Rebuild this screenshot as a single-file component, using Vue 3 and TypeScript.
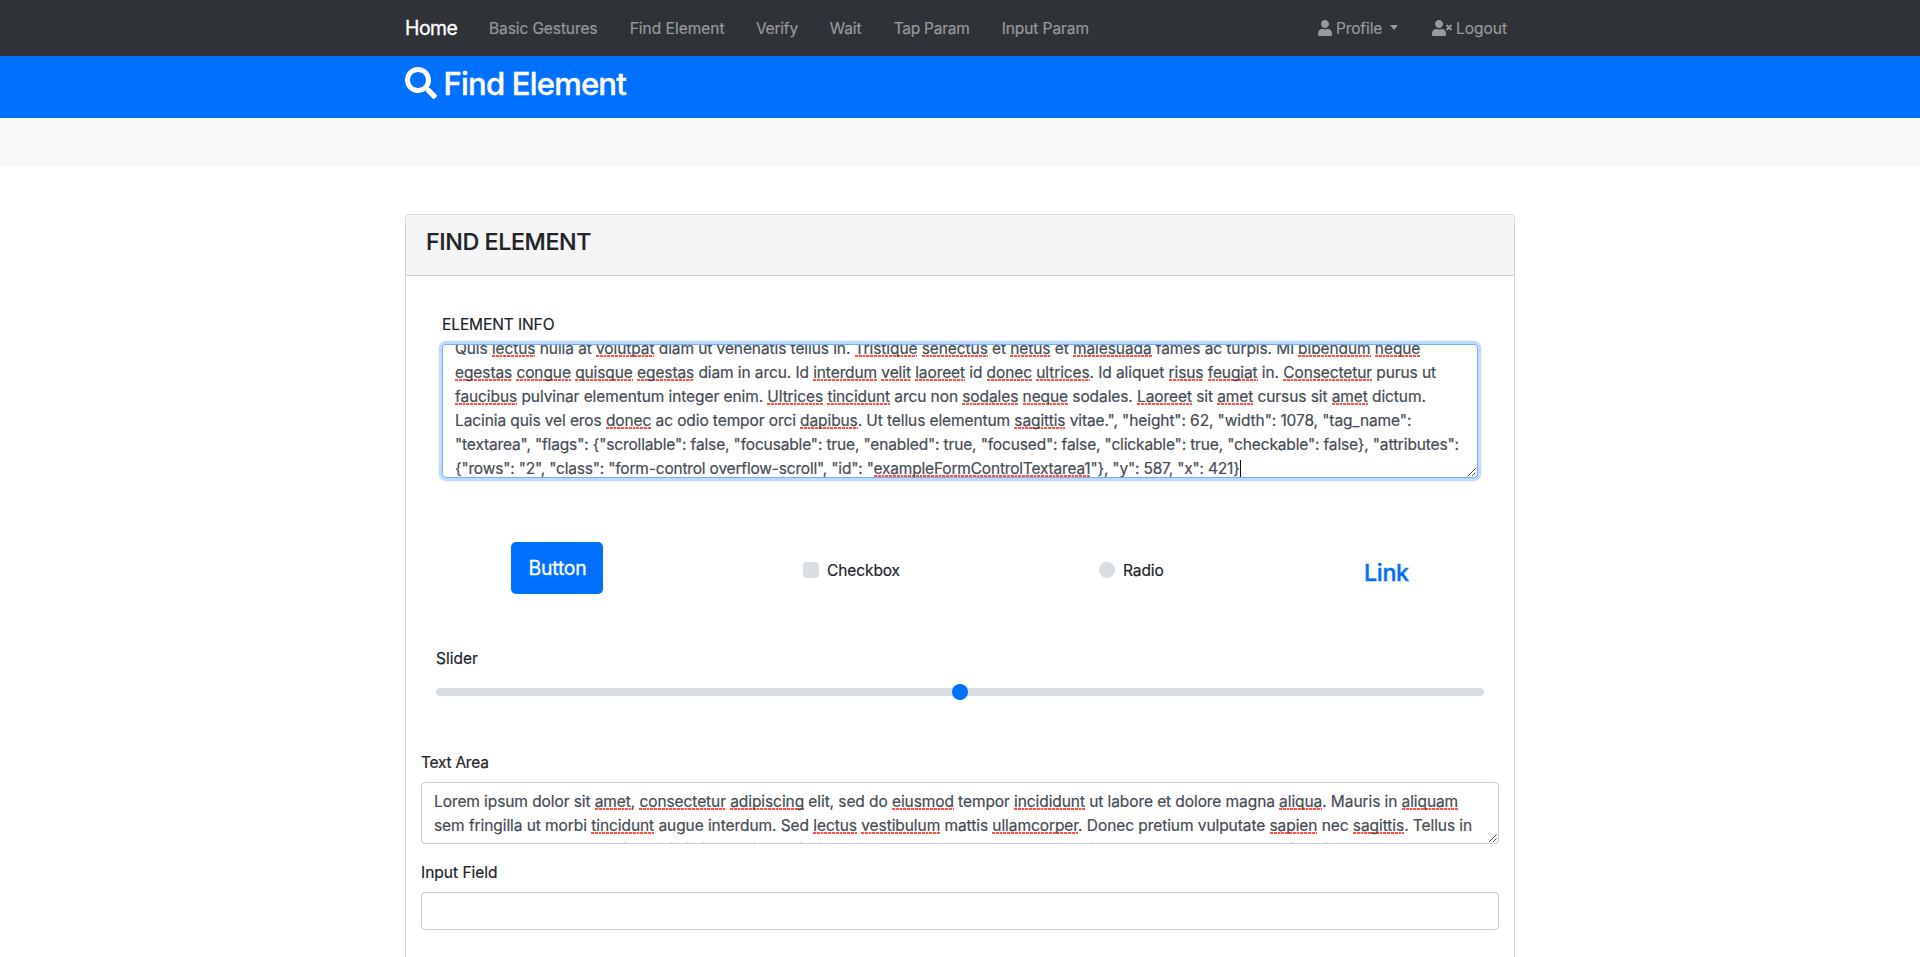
<script setup lang="ts">
interface Segment {
  text: string
  flagged: boolean
}

const links = [
  { label: 'Basic Gestures', cls: 'gestures' },
  { label: 'Find Element', cls: 'find' },
  { label: 'Verify', cls: 'verify' },
  { label: 'Wait', cls: 'wait' },
  { label: 'Tap Param', cls: 'tap' },
  { label: 'Input Param', cls: 'input-param' },
]

// Words between tildes are marked by the spell checker.
const parse = (line: string): Segment[] =>
  line
    .split('~')
    .map((text, i) => ({ text, flagged: i % 2 === 1 }))
    .filter((s) => s.text.length > 0)

const infoLines = [
  'Quis ~lectus~ nulla at ~volutpat~ diam ut venenatis tellus in. ~Tristique~ ~senectus~ et ~netus~ et ~malesuada~ fames ac turpis. Mi ~bibendum~ ~neque~',
  '~egestas~ ~congue~ ~quisque~ ~egestas~ diam in arcu. Id ~interdum~ ~velit~ ~laoreet~ id ~donec~ ~ultrices~. Id aliquet ~risus~ ~feugiat~ in. ~Consectetur~ purus ut',
  '~faucibus~ pulvinar elementum integer enim. ~Ultrices~ ~tincidunt~ arcu non ~sodales~ ~neque~ sodales. ~Laoreet~ sit ~amet~ cursus sit ~amet~ dictum.',
  'Lacinia quis vel eros ~donec~ ac odio tempor orci ~dapibus~. Ut tellus elementum ~sagittis~ vitae.", "height": 62, "width": 1078, "tag_name":',
  '"textarea", "flags": {"scrollable": false, "focusable": true, "enabled": true, "focused": false, "clickable": true, "checkable": false}, "attributes":',
  '{"rows": "2", "class": "form-control overflow-scroll", "id": "~exampleFormControlTextarea1~"}, "y": 587, "x": 421}',
].map(parse)

const areaLines = [
  'Lorem ipsum dolor sit ~amet~, ~consectetur~ ~adipiscing~ elit, sed do ~eiusmod~ tempor ~incididunt~ ut labore et dolore magna ~aliqua~. Mauris in ~aliquam~',
  'sem fringilla ut morbi ~tincidunt~ augue interdum. Sed ~lectus~ ~vestibulum~ mattis ~ullamcorper~. Donec pretium vulputate ~sapien~ nec ~sagittis~. Tellus in',
  'metus vulputate eu scelerisque felis imperdiet proin fermentum leo vel orci porta non pulvinar neque laoreet suspendisse interdum',
].map(parse)
</script>

<template>
  <div class="page">
    <nav class="navbar">
      <div class="container nav-row">
        <a class="brand">Home</a>
        <a v-for="l in links" :key="l.label" class="nav-link" :class="l.cls">{{ l.label }}</a>
        <div class="nav-right">
          <a class="nav-link profile">
            <svg width="14" height="16" viewBox="0 0 448 512"><path fill="currentColor" d="M224 256c70.7 0 128-57.3 128-128S294.7 0 224 0 96 57.3 96 128s57.3 128 128 128zm89.6 32h-16.7c-22.2 10.2-46.9 16-72.9 16s-50.6-5.8-72.9-16h-16.7C60.2 288 0 348.2 0 422.4V464c0 26.5 21.5 48 48 48h352c26.5 0 48-21.5 48-48v-41.6c0-74.2-60.2-134.4-134.4-134.4z" /></svg>
            <span>Profile</span>
            <i class="caret"></i>
          </a>
          <a class="nav-link">
            <svg width="20" height="16" viewBox="0 0 640 512"><path fill="currentColor" d="M589.6 240l45.6-45.6c6.3-6.3 6.3-16.5 0-22.8l-22.8-22.8c-6.3-6.3-16.5-6.3-22.8 0L544 194.4l-45.6-45.6c-6.3-6.3-16.5-6.3-22.8 0l-22.8 22.8c-6.3 6.3-6.3 16.5 0 22.8l45.6 45.6-45.6 45.6c-6.3 6.3-6.3 16.5 0 22.8l22.8 22.8c6.3 6.3 16.5 6.3 22.8 0l45.6-45.6 45.6 45.6c6.3 6.3 16.5 6.3 22.8 0l22.8-22.8c6.3-6.3 6.3-16.5 0-22.8L589.6 240z" /><path fill="currentColor" d="M224 256c70.7 0 128-57.3 128-128S294.7 0 224 0 96 57.3 96 128s57.3 128 128 128zm89.6 32h-16.7c-22.2 10.2-46.9 16-72.9 16s-50.6-5.8-72.9-16h-16.7C60.2 288 0 348.2 0 422.4V464c0 26.5 21.5 48 48 48h352c26.5 0 48-21.5 48-48v-41.6c0-74.2-60.2-134.4-134.4-134.4z" /></svg>
            <span>Logout</span>
          </a>
        </div>
      </div>
    </nav>

    <header class="banner">
      <div class="container banner-row">
        <svg width="32" height="32" viewBox="0 0 512 512"><path fill="currentColor" d="M505 442.7L405.3 343c-4.5-4.5-10.6-7-17-7H372c27.6-35.3 44-79.7 44-128C416 93.1 322.9 0 208 0S0 93.1 0 208s93.1 208 208 208c48.3 0 92.7-16.4 128-44v16.3c0 6.4 2.5 12.5 7 17l99.7 99.7c9.4 9.4 24.6 9.4 33.9 0l28.3-28.3c9.4-9.4 9.4-24.6.1-34zM208 336c-70.7 0-128-57.2-128-128 0-70.7 57.2-128 128-128 70.7 0 128 57.2 128 128 0 70.7-57.2 128-128 128z" /></svg>
        <h1>Find Element</h1>
      </div>
    </header>
    <div class="strip"></div>

    <main class="container card">
      <div class="card-header"><h4>FIND ELEMENT</h4></div>

      <section class="info">
        <label class="info-label">ELEMENT INFO</label>
        <div class="control focused">
          <div class="lines scrolled">
            <div v-for="(line, i) in infoLines" :key="i" class="line" :class="'info-' + (i + 1)">
              <span v-for="(s, j) in line" :key="j" :class="{ flagged: s.flagged }">{{ s.text }}</span><i v-if="i === infoLines.length - 1" class="cursor"></i>
            </div>
          </div>
          <svg class="grip" width="9" height="9" viewBox="0 0 9 9"><path d="M0 8L7.5 .5M4 8L7.5 4.5" stroke="#4c4c4c" fill="none" /></svg>
        </div>
      </section>

      <section class="widgets">
        <button class="btn" type="button">Button</button>
        <div class="check checkbox"><i class="box"></i><span>Checkbox</span></div>
        <div class="check radio"><i class="box round"></i><span>Radio</span></div>
        <a class="link">Link</a>
      </section>

      <section class="slider">
        <label>Slider</label>
        <div class="track"><i class="thumb"></i></div>
      </section>

      <section class="fields">
        <label class="area-label">Text Area</label>
        <div class="control area">
          <div class="lines">
            <div v-for="(line, i) in areaLines" :key="i" class="line" :class="'area-' + (i + 1)">
              <span v-for="(s, j) in line" :key="j" :class="{ flagged: s.flagged }">{{ s.text }}</span>
            </div>
          </div>
          <svg class="grip" width="9" height="9" viewBox="0 0 9 9"><path d="M0 8L7.5 .5M4 8L7.5 4.5" stroke="#4c4c4c" fill="none" /></svg>
        </div>
        <label class="field-label">Input Field</label>
        <div class="control field"></div>
      </section>
    </main>
  </div>
</template>

<style scoped>
.page {
  height: 957px;
  overflow: hidden;
  background: #fff;
  color: #202428;
  font-family: Inter, "Liberation Sans", sans-serif;
  font-size: 15.5px;
  line-height: 24px;
  -webkit-text-stroke: 0.2px currentColor;
}
.page *,
.page *::before {
  box-sizing: border-box;
}
.container {
  width: 1110px;
  margin: 0 auto;
}
.navbar {
  height: 56px;
  background: #2f3337;
}
.nav-row {
  display: flex;
  align-items: center;
  height: 56px;
  padding-top: 1px;
}
.brand {
  width: 84px;
  margin-top: -2px;
  color: #fff;
  font-size: 19.4px;
  line-height: 30px;
  letter-spacing: -0.5px;
  -webkit-text-stroke: 0.3px currentColor;
}
.nav-link {
  display: flex;
  align-items: center;
  padding-top: 1px;
  color: #97999b;
  white-space: nowrap;
}
.gestures {
  width: 140.7px;
  letter-spacing: -0.1px;
}
.find {
  width: 126.2px;
}
.verify {
  width: 73.8px;
  letter-spacing: -0.2px;
}
.wait {
  width: 64px;
}
.tap {
  width: 108px;
  letter-spacing: -0.25px;
}
.input-param {
  letter-spacing: -0.08px;
}
.nav-right {
  display: flex;
  margin-left: auto;
  padding-right: 8px;
}
.nav-right svg {
  margin: -2px 4px 0 0;
}
.profile {
  width: 114px;
}
.profile span {
  letter-spacing: -0.1px;
}
.caret {
  margin: -4px 0 0 8px;
  border-top: 5px solid;
  border-left: 4.5px solid transparent;
  border-right: 4.5px solid transparent;
}
.banner {
  height: 62px;
  background: #0070ff;
  color: #fff;
}
.banner-row {
  display: flex;
  align-items: flex-start;
  gap: 6.5px;
  padding-top: 9px;
}
.banner-row svg {
  margin-top: 2px;
}
h1 {
  margin: 0;
  font-size: 31px;
  line-height: 38px;
  font-weight: 500;
  letter-spacing: -0.78px;
  -webkit-text-stroke: 0.4px currentColor;
}
.strip {
  height: 48px;
  background: #f6f8fa;
}
.card {
  margin-top: 48px;
  height: 800px;
  border: 1px solid #d6d6d6;
  border-radius: 4px;
}
.card-header {
  height: 61px;
  padding: 12px 20px;
  border-bottom: 1px solid #d2d2d2;
  border-radius: 3px 3px 0 0;
  background: #f5f5f5;
}
h4 {
  margin: 0;
  font-size: 23.25px;
  line-height: 29px;
  font-weight: 500;
  letter-spacing: -0.4px;
  -webkit-text-stroke: 0.2px currentColor;
}
label {
  display: block;
  margin-bottom: 8px;
}
.info {
  padding: 37px 36px 0;
}
.info-label {
  margin-bottom: 7px;
  letter-spacing: -0.1px;
}
.control {
  position: relative;
  padding: 7px 12px 0;
  border: 1px solid #c7cbd5;
  border-radius: 4px;
  background: #fff;
  color: #464c53;
}
.focused {
  height: 134px;
  padding-top: 0;
  border-color: #75aef8;
  box-shadow: 0 0 0 3.2px #bfdaff;
}
.control .lines {
  height: 100%;
}
.focused,
.area {
  overflow: hidden;
}
.line {
  height: 24px;
  white-space: nowrap;
}
.scrolled {
  margin-top: -8px;
}
.info-1 { letter-spacing: -0.084px; }
.info-2 { letter-spacing: -0.094px; }
.info-3 { letter-spacing: -0.086px; }
.info-4 { letter-spacing: -0.096px; }
.info-5 { letter-spacing: -0.147px; }
.info-6 { letter-spacing: -0.185px; }
.area-1 { letter-spacing: -0.083px; }
.area-2 { letter-spacing: -0.07px; }
.flagged {
  background: repeating-linear-gradient(90deg, #ff5249 0 2.8px, #ffd2cf 2.8px 3.8px) 0 16px / 100% 2px no-repeat;
}
.cursor {
  display: inline-block;
  width: 1px;
  height: 18px;
  vertical-align: -4px;
  background: #111;
}
.grip {
  position: absolute;
  right: 0;
  bottom: 0;
}
.widgets {
  display: flex;
  align-items: center;
  gap: 200px;
  height: 52px;
  margin-top: 64px;
  padding-left: 105px;
}
.btn {
  width: 92px;
  height: 52px;
  padding: 0 0 1px 1px;
  border: 0;
  border-radius: 5px;
  background: #0070ff;
  color: #fff;
  font: 19.4px/30px Inter, "Liberation Sans", sans-serif;
  letter-spacing: -0.25px;
  -webkit-text-stroke: 0.3px currentColor;
}
.check {
  display: flex;
  align-items: center;
  gap: 8px;
  margin-top: 4px;
}
.check span {
  padding-top: 1px;
  margin-bottom: -1px;
  letter-spacing: -0.1px;
}
.checkbox {
  width: 96px;
}
.radio {
  width: 65px;
}
.box {
  flex: none;
  width: 16px;
  height: 16px;
  border-radius: 4px;
  background: #d9dee2;
}
.round {
  border-radius: 50%;
}
.link {
  margin-top: 8px;
  color: #0070ff;
  font-size: 23.25px;
  font-weight: 500;
  line-height: 29px;
  letter-spacing: -0.3px;
  -webkit-text-stroke: 0.35px currentColor;
}
.slider {
  margin-top: 53px;
  padding: 0 30px;
}
.track {
  display: flex;
  justify-content: center;
  align-items: center;
  height: 8px;
  margin-top: 17px;
  border-radius: 4px;
  background: #d9dee2;
}
.thumb {
  width: 16px;
  height: 16px;
  border-radius: 50%;
  background: #0070ff;
}
.fields {
  margin-top: 55px;
  padding: 0 15px;
}
.area-label {
  margin-bottom: 7px;
  letter-spacing: -0.25px;
}
.area {
  height: 62px;
  margin-bottom: 17px;
}
.field-label {
  margin-bottom: 7px;
}
.field {
  height: 38px;
}
</style>
